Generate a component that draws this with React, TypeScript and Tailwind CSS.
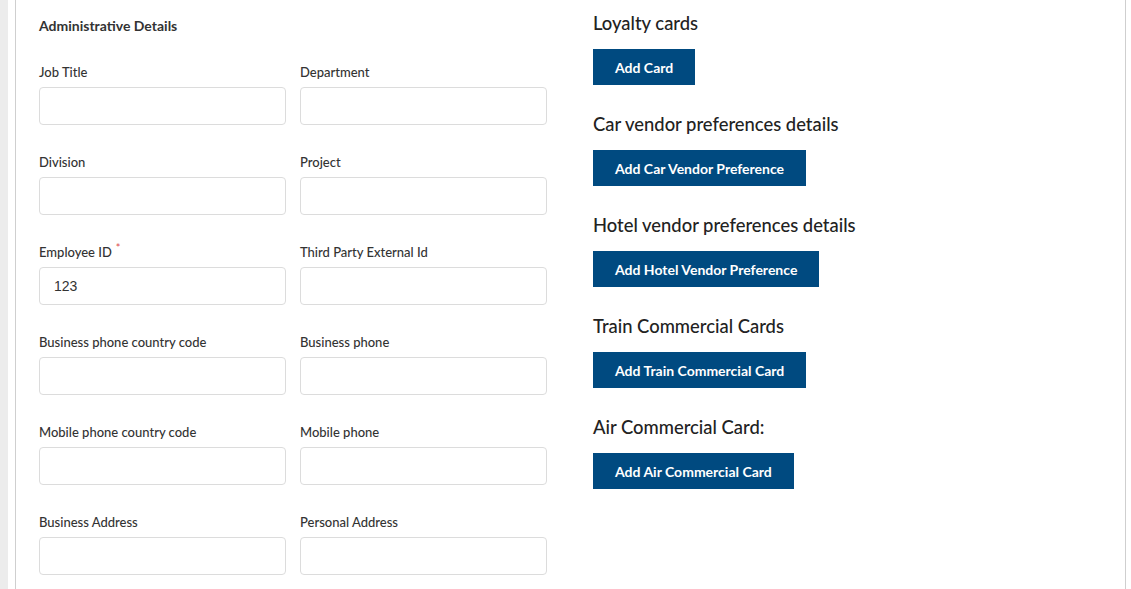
import React from "react";

const fields: [string, string, string?][] = [
  ["Job Title", "Department"],
  ["Division", "Project"],
  ["Employee ID", "Third Party External Id", "123"],
  ["Business phone country code", "Business phone"],
  ["Mobile phone country code", "Mobile phone"],
  ["Business Address", "Personal Address"],
];

const sections = [
  ["Loyalty cards", "Add Card"],
  ["Car vendor preferences details", "Add Car Vendor Preference"],
  ["Hotel vendor preferences details", "Add Hotel Vendor Preference"],
  ["Train Commercial Cards", "Add Train Commercial Card"],
  ["Air Commercial Card:", "Add Air Commercial Card"],
];

function Field({ label, value, required }: { label: string; value?: string; required?: boolean }) {
  return (
    <div className="flex flex-col">
      <label className="h-[18px] text-[13px] leading-[18px] font-medium text-[#333] mb-[6px]">
        {label}
        {required && <span className="text-[#e05555] text-[11px] align-top ml-[4px] relative top-[-4px]">*</span>}
      </label>
      <input
        defaultValue={value}
        className="h-[38px] w-full rounded-[4px] border border-[#dcdcdc] bg-white px-[14px] text-[14px] text-[#333] outline-none"
        style={{ fontFamily: "'Liberation Sans', Arial, sans-serif" }}
      />
    </div>
  );
}

export default function App() {
  return (
    <div className="flex h-[589px] w-[1131px] bg-white overflow-hidden" style={{ fontFamily: "Lato, 'Noto Sans', sans-serif" }}>
      <div className="w-[8px] bg-[#ececec]" />
      <div className="w-[7px]" />
      <div className="flex w-[1111px] border-l border-r border-[#cfcfcf] pl-[23px]">
        <div className="w-[508px] pt-[18px]">
          <h4 className="text-[14px] leading-[16px] font-bold text-[#333] mb-[29px]">Administrative Details</h4>
          <div className="grid grid-cols-2 gap-x-[14px] gap-y-[28px]">
            {fields.map(([a, b, v]) => (
              <React.Fragment key={a}>
                <Field label={a} value={v} required={a === "Employee ID"} />
                <Field label={b} />
              </React.Fragment>
            ))}
          </div>
        </div>
        <div className="ml-[46px] pt-[11px]">
          {sections.map(([title, btn]) => (
            <div key={title} className="mb-[27px]">
              <h3 className="text-[18.4px] leading-[24px] font-medium text-[#222] mb-[14px]">{title}</h3>
              <button className="h-[36px] bg-[#004a80] px-[22px] text-[14px] font-bold text-white">{btn}</button>
            </div>
          ))}
        </div>
      </div>
    </div>
  );
}
